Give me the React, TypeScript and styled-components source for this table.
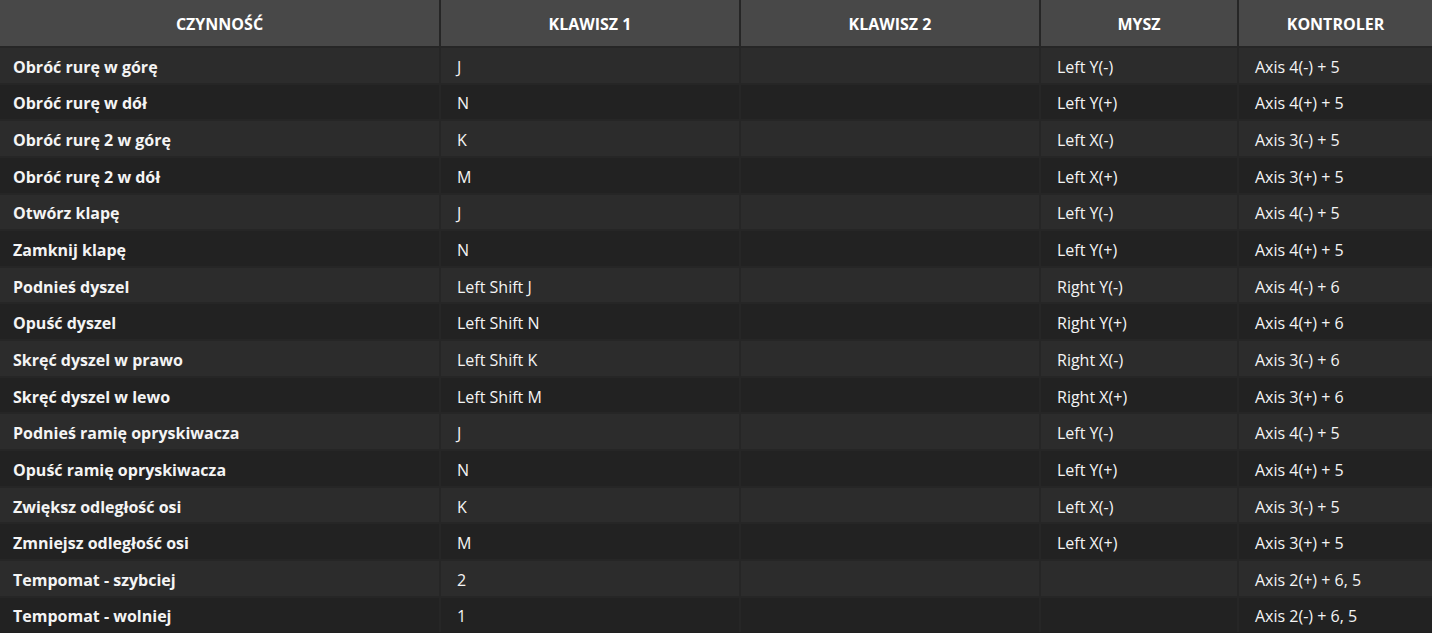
import React from "react";
import styled, { createGlobalStyle } from "styled-components";

const GlobalStyle = createGlobalStyle`
  html, body {
    margin: 0;
    padding: 0;
    background: #1f1f1f;
  }
  body {
    font-family: "Open Sans", "Liberation Sans", sans-serif;
  }
`;

type Binding = [string, string, string, string, string];

const columns = ["Czynność", "Klawisz 1", "Klawisz 2", "Mysz", "Kontroler"];

const bindings: Binding[] = [
  ["Obróć rurę w górę", "J", "", "Left Y(-)", "Axis 4(-) + 5"],
  ["Obróć rurę w dół", "N", "", "Left Y(+)", "Axis 4(+) + 5"],
  ["Obróć rurę 2 w górę", "K", "", "Left X(-)", "Axis 3(-) + 5"],
  ["Obróć rurę 2 w dół", "M", "", "Left X(+)", "Axis 3(+) + 5"],
  ["Otwórz klapę", "J", "", "Left Y(-)", "Axis 4(-) + 5"],
  ["Zamknij klapę", "N", "", "Left Y(+)", "Axis 4(+) + 5"],
  ["Podnieś dyszel", "Left Shift J", "", "Right Y(-)", "Axis 4(-) + 6"],
  ["Opuść dyszel", "Left Shift N", "", "Right Y(+)", "Axis 4(+) + 6"],
  ["Skręć dyszel w prawo", "Left Shift K", "", "Right X(-)", "Axis 3(-) + 6"],
  ["Skręć dyszel w lewo", "Left Shift M", "", "Right X(+)", "Axis 3(+) + 6"],
  ["Podnieś ramię opryskiwacza", "J", "", "Left Y(-)", "Axis 4(-) + 5"],
  ["Opuść ramię opryskiwacza", "N", "", "Left Y(+)", "Axis 4(+) + 5"],
  ["Zwiększ odległość osi", "K", "", "Left X(-)", "Axis 3(-) + 5"],
  ["Zmniejsz odległość osi", "M", "", "Left X(+)", "Axis 3(+) + 5"],
  ["Tempomat - szybciej", "2", "", "", "Axis 2(+) + 6, 5"],
  ["Tempomat - wolniej", "1", "", "", "Axis 2(-) + 6, 5"],
];

const Table = styled.div`
  display: flex;
  flex-direction: column;
  gap: 2px;
  width: 1432px;
  background: #262626;
`;

const Row = styled.div<{ $head?: boolean }>`
  display: grid;
  grid-template-columns: 439px 298px 298px 196px 1fr;
  column-gap: 2px;
  height: ${(p) => (p.$head ? "46px" : "34.65px")};
`;

const HeadCell = styled.div`
  display: flex;
  align-items: center;
  justify-content: center;
  padding-top: 1px;
  background: #484848;
  color: #ffffff;
  font-size: 16px;
  font-weight: 700;
  text-transform: uppercase;
`;

const Cell = styled.div<{ $odd: boolean; $first?: boolean }>`
  display: flex;
  align-items: center;
  padding: 3px 0 0 ${(p) => (p.$first ? "13px" : "16px")};
  background: ${(p) => (p.$odd ? "#2c2c2c" : "#222222")};
  color: #f4f4f4;
  font-size: 16px;
  font-weight: ${(p) => (p.$first ? 700 : 400)};
  white-space: nowrap;
`;

const App: React.FC = () => (
  <>
    <GlobalStyle />
    <Table>
      <Row $head>
        {columns.map((c) => (
          <HeadCell key={c}>{c}</HeadCell>
        ))}
      </Row>
      {bindings.map((b, i) => (
        <Row key={i}>
          {b.map((v, j) => (
            <Cell key={j} $odd={i % 2 === 0} $first={j === 0}>
              {v}
            </Cell>
          ))}
        </Row>
      ))}
    </Table>
  </>
);

export default App;
